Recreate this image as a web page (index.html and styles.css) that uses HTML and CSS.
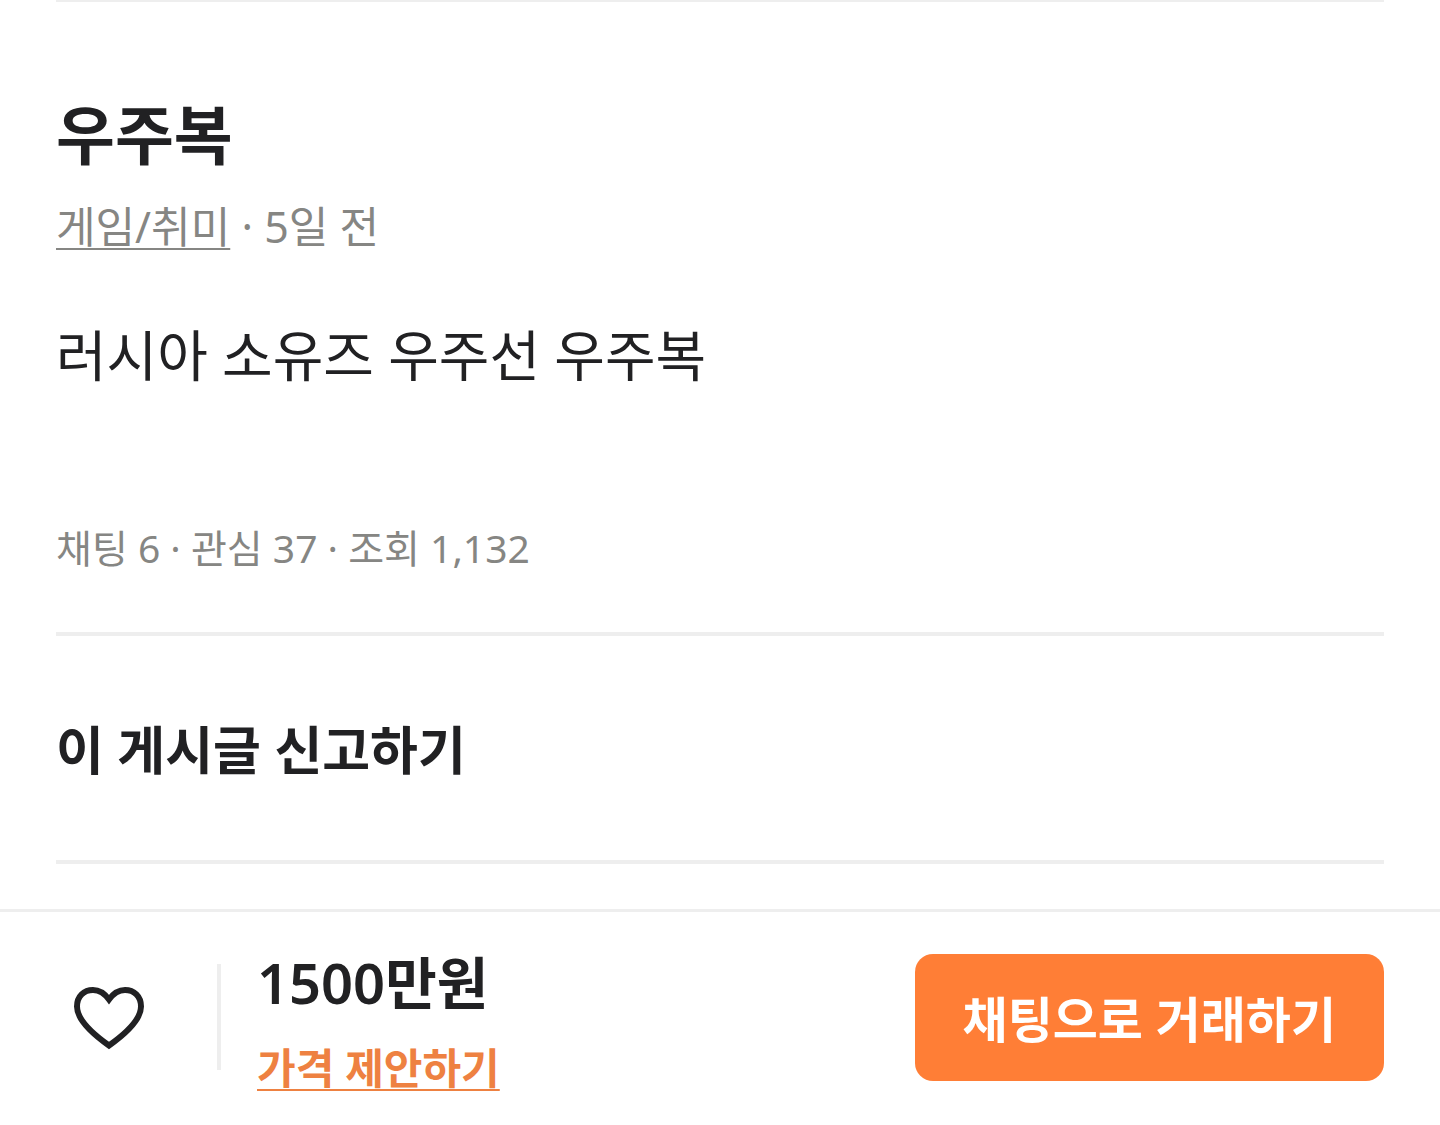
FILE: index.html
```html
<!DOCTYPE html>
<html lang="ko">
<head>
  <meta charset="UTF-8">
  <meta name="viewport" content="width=device-width, initial-scale=1">
  <title>우주복</title>
  <link rel="stylesheet" href="styles.css">
</head>
<body>
  <main>
    <article class="post">
      <h1>우주복</h1>
      <p class="meta"><a href="#">게임/취미</a> · 5일 전</p>
      <p class="description">러시아 소유즈 우주선 우주복</p>
      <p class="counts">채팅 6 · 관심 37 · 조회 1,132</p>
    </article>
    <a class="report" href="#">이 게시글 신고하기</a>
  </main>

  <footer class="bar">
    <button type="button" class="like" aria-label="관심">
      <svg viewBox="0 0 72 66" width="72" height="66">
        <path d="M36 61.500 C24 53 4 37 4 22.500 C4 12 11 6 20 6 C27 6 32 10 36 15.500 C40 10 45 6 52 6 C61 6 68 12 68 22.500 C68 37 48 53 36 61.500 Z"/>
      </svg>
    </button>
    <div class="price">
      <strong>1500만원</strong>
      <a href="#">가격 제안하기</a>
    </div>
    <button type="button" class="chat">채팅으로 거래하기</button>
  </footer>
</body>
</html>
```

FILE: styles.css
```css
* {
  box-sizing: border-box;
}
body {
  margin: 0;
  min-height: 100vh;
  display: flex;
  flex-direction: column;
  background: #ffffff;
  color: #212123;
  font-family: "Noto Sans", "Noto Sans CJK KR", sans-serif;
}
main {
  flex: 1;
  padding: 0 56px;
}
h1, p {
  margin: 0;
}
a {
  text-decoration-thickness: 2px;
  text-decoration-skip-ink: none;
  text-underline-offset: 5px;
}
.post {
  padding: 85px 0 56px;
  border-top: 2px solid #eeeeee;
  border-bottom: 4px solid #eeeeee;
}
h1 {
  font-size: 64px;
  line-height: 96px;
}
.meta {
  margin-top: 12px;
  font-size: 43px;
  line-height: 64px;
  color: #868683;
}
.meta a {
  color: inherit;
}
.description {
  margin-top: 54px;
  font-size: 55px;
  line-height: 84px;
}
.counts {
  margin-top: 123px;
  font-size: 39px;
  line-height: 56px;
  color: #868683;
}
.report {
  display: block;
  padding: 78px 0 74px;
  border-bottom: 4px solid #eeeeee;
  color: inherit;
  font-size: 52px;
  font-weight: bold;
  line-height: 72px;
  text-decoration: none;
}
.bar {
  display: flex;
  align-items: center;
  padding: 24px 56px 27px;
  border-top: 3px solid #eeeeee;
}
.like {
  width: 165px;
  height: 106px;
  padding: 0 0 0 17px;
  border: none;
  border-right: 4px solid #eeeeee;
  background: none;
  text-align: left;
  cursor: pointer;
}
.like svg {
  display: block;
  fill: none;
  stroke: #212123;
  stroke-width: 6;
}
.price {
  flex: 1;
  display: flex;
  flex-direction: column;
  align-items: flex-start;
  gap: 16px;
  padding: 6px 0 0 36px;
}
.price strong {
  font-size: 56px;
  font-weight: 600;
  line-height: 80px;
}
.price a {
  color: #ee8141;
  font-size: 42px;
  font-weight: bold;
  line-height: 60px;
}
.chat {
  padding: 30px 48px 26px;
  border: none;
  border-radius: 18px;
  background: #ff7e36;
  color: #ffffff;
  font-family: inherit;
  font-size: 49px;
  font-weight: bold;
  line-height: 71px;
  cursor: pointer;
}
```
